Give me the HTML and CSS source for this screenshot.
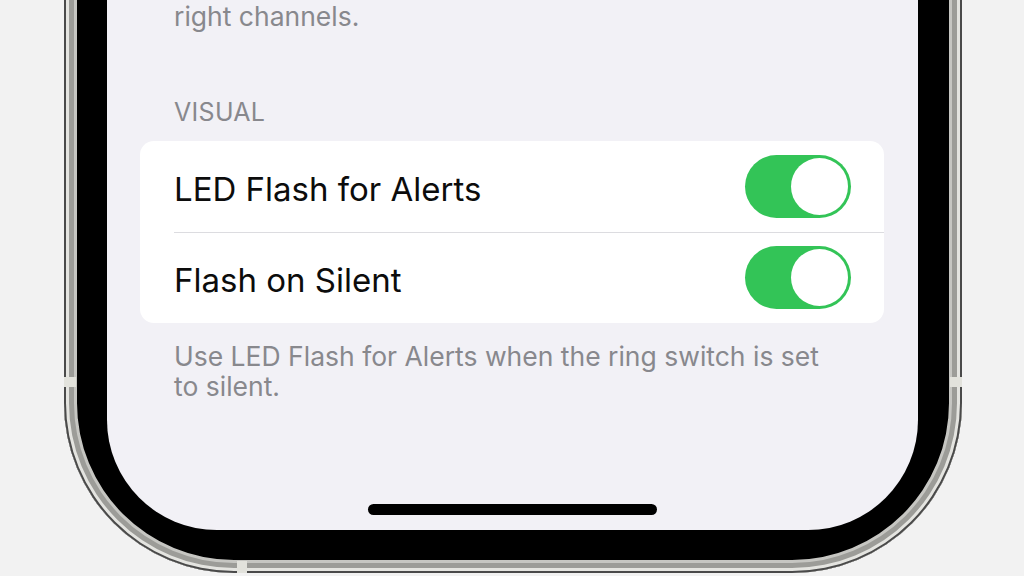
FILE: index.html
```html
<!DOCTYPE html>
<html lang="en">
<head>
<meta charset="utf-8">
<title>LED Flash for Alerts</title>
<link rel="stylesheet" href="styles.css">
</head>
<body>
<div class="phone">
  <span class="antenna antenna-left"></span>
  <span class="antenna antenna-right"></span>
  <span class="antenna antenna-bottom"></span>
  <div class="screen">
    <p class="footnote prev">right channels.</p>
    <h2 class="section-title">VISUAL</h2>
    <div class="card">
      <div class="row">
        <span class="label">LED Flash for Alerts</span>
        <span class="switch on"><span class="knob"></span></span>
      </div>
      <div class="row divided">
        <span class="label">Flash on Silent</span>
        <span class="switch on"><span class="knob"></span></span>
      </div>
    </div>
    <p class="footnote">Use LED Flash for Alerts when the ring switch is set to silent.</p>
    <div class="home-indicator"></div>
  </div>
</div>
</body>
</html>
```
FILE: styles.css
```css
html, body {
  margin: 0;
  padding: 0;
}
body {
  width: 1024px;
  height: 576px;
  overflow: hidden;
  background: #f2f2f2;
  font-family: Inter, "Liberation Sans", sans-serif;
}
.phone {
  position: relative;
  box-sizing: border-box;
  width: 898px;
  height: 673px;
  margin: -100px 0 0 64px;
  padding: 0 44px 43px 43px;
  background: #000;
  border-radius: 0 0 170px 170px;
  box-shadow:
    inset 0 0 0 2px #4a4a4a,
    inset 0 0 0 5px #e4e4e0,
    inset 0 0 0 10px #9c9c98,
    inset 0 0 0 13px #c6c6c2;
  display: flex;
}
.antenna {
  position: absolute;
  background: #e2e2dc;
}
.antenna-left {
  left: 0;
  top: 477px;
  width: 12px;
  height: 10px;
}
.antenna-right {
  right: 0;
  top: 477px;
  width: 12px;
  height: 10px;
}
.antenna-bottom {
  bottom: 0;
  left: 173px;
  width: 10px;
  height: 12px;
}
.screen {
  flex: 1;
  display: flex;
  flex-direction: column;
  background: #f2f1f6;
  border-radius: 0 0 110px 110px;
  padding-top: 101px;
}
.footnote {
  margin: 0;
  padding: 0 85px 0 67px;
  font-size: 26.5px;
  line-height: 30px;
  color: #88888d;
}
.prev {
  margin-bottom: 67px;
}
.section-title {
  margin: 0 0 15px;
  padding-left: 67px;
  font-size: 25px;
  line-height: 28px;
  letter-spacing: 0.3px;
  font-weight: 400;
  color: #88888d;
}
.card {
  margin: 0 34px 18px 33px;
  background: #fff;
  border-radius: 14px;
}
.row {
  box-sizing: border-box;
  height: 91px;
  display: flex;
  align-items: center;
  justify-content: space-between;
  padding: 0 33px 0 34px;
}
.divided {
  position: relative;
}
.divided::before {
  content: "";
  position: absolute;
  left: 34px;
  right: 0;
  top: 0;
  height: 1px;
  background: #dcdce0;
}
.label {
  padding-top: 4px;
  font-size: 33px;
  color: #0c0c0c;
}
.switch {
  box-sizing: border-box;
  width: 106px;
  height: 63px;
  border-radius: 32px;
  padding: 3px;
  display: flex;
  justify-content: flex-end;
  background: #33c457;
}
.knob {
  width: 57px;
  height: 57px;
  border-radius: 50%;
  background: #fff;
}
.home-indicator {
  align-self: center;
  width: 289px;
  height: 11px;
  border-radius: 6px;
  background: #000;
  margin: auto 0 15px;
}
```
